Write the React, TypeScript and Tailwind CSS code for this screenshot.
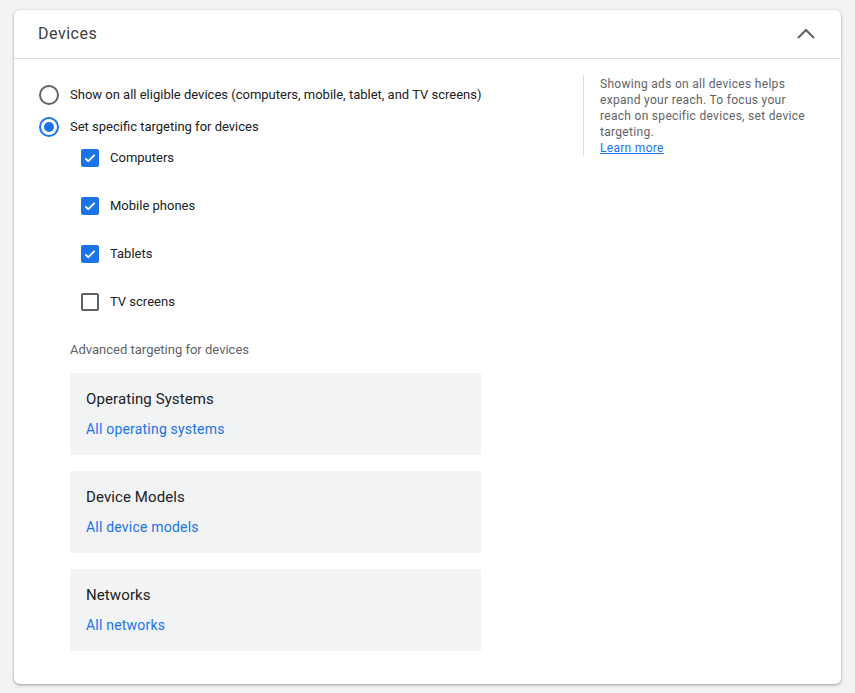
import React, { useState } from 'react';

const devicesList = ['Computers', 'Mobile phones', 'Tablets', 'TV screens'];

const advanced = [
  { title: 'Operating Systems', link: 'All operating systems' },
  { title: 'Device Models', link: 'All device models' },
  { title: 'Networks', link: 'All networks' },
];

const Radio: React.FC<{ checked: boolean }> = ({ checked }) => (
  <span
    className={`flex h-5 w-5 shrink-0 items-center justify-center rounded-full border-2 ${
      checked ? 'border-[#1a73e8]' : 'border-[#5f6368]'
    }`}
  >
    {checked && <span className="h-[10px] w-[10px] rounded-full bg-[#1a73e8]" />}
  </span>
);

const Checkbox: React.FC<{ checked: boolean }> = ({ checked }) =>
  checked ? (
    <span className="flex h-[18px] w-[18px] shrink-0 items-center justify-center rounded-[2px] bg-[#1a73e8]">
      <svg width="14" height="14" viewBox="0 0 24 24" fill="none">
        <path d="M4 12.5l5 5L20 6.5" stroke="#fff" strokeWidth="3" />
      </svg>
    </span>
  ) : (
    <span className="h-[18px] w-[18px] shrink-0 rounded-[2px] border-2 border-[#5f6368]" />
  );

const App: React.FC = () => {
  const [mode, setMode] = useState<'all' | 'specific'>('specific');
  const [checked, setChecked] = useState<boolean[]>([true, true, true, false]);

  return (
    <div className="min-h-screen bg-[#f1f3f4] px-[14px] pt-[10px] pb-[9px] font-['Roboto',sans-serif]">
      <div className="rounded-[6px] bg-white shadow-[0_1px_2px_rgba(60,64,67,0.3),0_1px_3px_1px_rgba(60,64,67,0.15)]">
        {/* Header */}
        <div className="flex h-[49px] items-center justify-between border-b border-[#dadce0] pl-6 pr-[26px]">
          <h2 className="text-base tracking-[0.5px] text-[#3c4043]">Devices</h2>
          <svg width="18" height="12" viewBox="0 0 18 12" fill="none">
            <path d="M1 10l8-8 8 8" stroke="#5f6368" strokeWidth="2" />
          </svg>
        </div>

        <div className="flex pl-[25px] pr-[25px] pb-[33px]">
          {/* Left column */}
          <div className="flex-1 pt-[20px]">
            <label className="flex h-8 cursor-pointer items-center gap-[11px]" onClick={() => setMode('all')}>
              <Radio checked={mode === 'all'} />
              <span className="text-[13px] text-[#202124]">
                Show on all eligible devices (computers, mobile, tablet, and TV screens)
              </span>
            </label>
            <label className="flex h-8 cursor-pointer items-center gap-[11px]" onClick={() => setMode('specific')}>
              <Radio checked={mode === 'specific'} />
              <span className="text-[13px] text-[#202124]">Set specific targeting for devices</span>
            </label>

            <div className="ml-[31px] mt-[-1px]">
              <div className="flex flex-col gap-4 pl-[11px]">
                {devicesList.map((d, i) => (
                  <label
                    key={d}
                    className="flex h-8 cursor-pointer items-center gap-[11px]"
                    onClick={() => setChecked(checked.map((c, j) => (j === i ? !c : c)))}
                  >
                    <Checkbox checked={checked[i]} />
                    <span className="text-[13px] text-[#202124]">{d}</span>
                  </label>
                ))}
              </div>

              <p className="mt-[22px] text-[13px] leading-5 text-[#5f6368]">Advanced targeting for devices</p>

              <div className="mt-[13px] flex w-[411px] flex-col gap-4">
                {advanced.map((a) => (
                  <div key={a.title} className="h-[82px] bg-[#f1f3f4] px-4 pt-4">
                    <div className="text-[15px] leading-5 tracking-[0.1px] text-[#202124]">{a.title}</div>
                    <div className="mt-[10px] text-sm leading-5 tracking-[0.2px] text-[#1a73e8]">{a.link}</div>
                  </div>
                ))}
              </div>
            </div>
          </div>

          {/* Sidebar */}
          <div className="pt-4">
            <div className="w-[233px] border-l border-[#dadce0] pl-4 text-xs leading-4 tracking-[0.3px] text-[#5f6368]">
              <p className="w-[216px] pt-px">
                Showing ads on all devices helps expand your reach. To focus your reach on specific devices, set device
                targeting.
              </p>
              <a className="text-[#1a73e8] underline">Learn more</a>
            </div>
          </div>
        </div>
      </div>
    </div>
  );
};

export default App;
